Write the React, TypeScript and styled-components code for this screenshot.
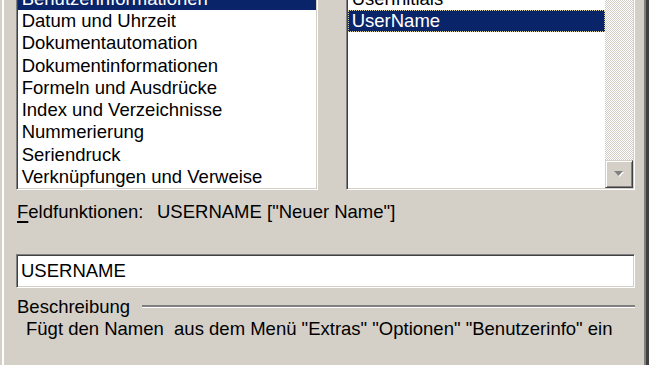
import styled, { createGlobalStyle } from "styled-components";

const GlobalStyle = createGlobalStyle`
  html, body {
    margin: 0;
    padding: 0;
    background: #d4d0c8;
    overflow: hidden;
  }
  body {
    font-family: "Liberation Sans", Arial, sans-serif;
  }
`;

const categories = [
  "Benutzerinformationen",
  "Datum und Uhrzeit",
  "Dokumentautomation",
  "Dokumentinformationen",
  "Formeln und Ausdrücke",
  "Index und Verzeichnisse",
  "Nummerierung",
  "Seriendruck",
  "Verknüpfungen und Verweise",
];

const fieldNames = ["UserInitials", "UserName"];

export default function App() {
  return (
    <>
      <GlobalStyle />
      <Window>
        <TopRow>
          <ListBox>
            <Items>
              {categories.map((c, i) => (
                <Item key={c} selected={i === 0}>
                  {c}
                </Item>
              ))}
            </Items>
          </ListBox>
          <ListBox>
            <Items>
              {fieldNames.map((f, i) => (
                <Item key={f} selected={i === 1} focused={i === 1}>
                  {f}
                </Item>
              ))}
            </Items>
            <ScrollBar>
              <Track />
              <ArrowButton>
                <svg width="12" height="8" viewBox="0 0 12 8">
                  <polygon points="2,2 11,2 6.5,7" fill="#ffffff" />
                  <polygon points="1,1 10,1 5.5,6" fill="#808080" />
                </svg>
              </ArrowButton>
            </ScrollBar>
          </ListBox>
        </TopRow>

        <FieldRow>
          <Label>
            <AccessKey>F</AccessKey>eldfunktionen:
          </Label>
          <span>USERNAME ["Neuer Name"]</span>
        </FieldRow>

        <TextInput>USERNAME</TextInput>

        <SectionHeader>
          <span>Beschreibung</span>
          <EtchedRule />
        </SectionHeader>
        <Description>
          {'Fügt den Namen  aus dem Menü "Extras" "Optionen" "Benutzerinfo" ein'}
        </Description>
      </Window>
    </>
  );
}

const Window = styled.div`
  width: 649px;
  height: 365px;
  box-sizing: border-box;
  padding: 0 14px 0 16px;
  background: #d4d0c8;
  box-shadow: inset 2px 0 0 #d4d0c8, inset 4px 0 0 #ffffff,
    inset -3px 0 0 #404040, inset -5px 0 0 #808080;
  display: flex;
  flex-direction: column;
  font-size: 18.5px;
  color: #000;
  overflow: hidden;
`;

const TopRow = styled.div`
  display: grid;
  grid-template-columns: 302px 289px;
  column-gap: 28px;
  margin-top: -14.4px;
`;

const sunken = `
  box-sizing: border-box;
  background: #ffffff;
  border: 1px solid;
  border-color: #808080 #ffffff #ffffff #808080;
  box-shadow: inset 1px 1px 0 #404040, inset -1px -1px 0 #d4d0c8;
`;

const ListBox = styled.div`
  ${sunken}
  height: 204.7px;
  display: flex;
  padding: 1px;
`;

const Items = styled.div`
  flex: 1;
  display: flex;
  flex-direction: column;
  overflow: hidden;
  min-width: 0;
`;

const Item = styled.div<{ selected?: boolean; focused?: boolean }>`
  height: 22.3px;
  line-height: 22.3px;
  padding-left: 3.7px;
  white-space: nowrap;
  flex-shrink: 0;
  background: ${({ selected }) => (selected ? "#0a246a" : "transparent")};
  color: ${({ selected }) => (selected ? "#ffffff" : "#000000")};
  outline: ${({ focused }) => (focused ? "1px dotted #d8d0a0" : "none")};
  outline-offset: -1px;
`;

const ScrollBar = styled.div`
  width: 28px;
  display: flex;
  flex-direction: column;
`;

const Track = styled.div`
  flex: 1;
  background-color: #ffffff;
  background-image: repeating-conic-gradient(#d4d0c8 0 25%, #ffffff 0 50%);
  background-size: 2px 2px;
`;

const ArrowButton = styled.div`
  height: 28px;
  box-sizing: border-box;
  background: #d4d0c8;
  border: 1px solid;
  border-color: #d4d0c8 #404040 #404040 #d4d0c8;
  box-shadow: inset 1px 1px 0 #ffffff, inset -1px -1px 0 #808080;
  display: flex;
  align-items: center;
  justify-content: center;
`;

const FieldRow = styled.div`
  margin-top: 10.6px;
  height: 22px;
  line-height: 22px;
  display: flex;
  padding-left: 1px;
  white-space: nowrap;
`;

const Label = styled.span`
  width: 140px;
`;

const AccessKey = styled.span`
  text-decoration: underline;
  text-decoration-thickness: 1.5px;
  text-underline-offset: 3px;
`;

const TextInput = styled.div`
  ${sunken}
  margin-top: 31px;
  height: 34px;
  line-height: 32px;
  padding-left: 4px;
`;

const SectionHeader = styled.div`
  margin-top: 8px;
  height: 22px;
  line-height: 22px;
  display: flex;
  align-items: center;
  padding-left: 1px;
`;

const EtchedRule = styled.div`
  flex: 1;
  margin-left: 12px;
  border-top: 2px solid #808080;
  border-bottom: 1px solid #ffffff;
`;

const Description = styled.div`
  padding-left: 10px;
  height: 22px;
  line-height: 22px;
  white-space: pre;
`;
